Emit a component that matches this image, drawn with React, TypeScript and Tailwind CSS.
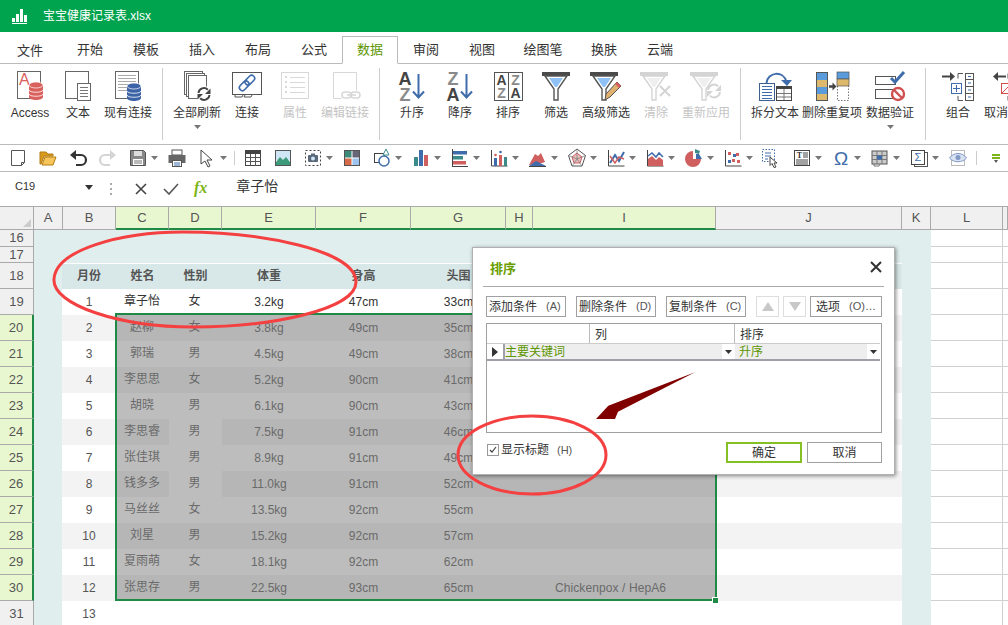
import { ReactNode } from "react";

const CJK = "font-['Liberation_Sans','Noto_Sans_CJK_SC',sans-serif]";

const tabs = ["开始", "模板", "插入", "布局", "公式", "数据", "审阅", "视图"];

type Item = { label: string; w: string; icon: ReactNode; off?: boolean; drop?: boolean };

function RibbonIcon({ children }: { children: ReactNode }) {
  return (
    <svg width="36" height="34" viewBox="0 0 36 34" fill="none" className="block shrink-0 overflow-visible">
      {children}
    </svg>
  );
}

function Lines({ x, y, w, n, gap = 3, c = "#777" }: { x: number; y: number; w: number; n: number; gap?: number; c?: string }) {
  return (
    <>
      {Array.from({ length: n }).map((_, i) => (
        <path key={i} d={`M${x} ${y + i * gap + 0.5}h${w}`} stroke={c} />
      ))}
    </>
  );
}

function Cylinder({ x, y, c }: { x: number; y: number; c: string }) {
  return (
    <>
      <path d={`M${x} ${y + 3}v12c0 4 14 4 14 0V${y + 3}z`} fill={c} />
      <ellipse cx={x + 7} cy={y + 3} rx="7" ry="3" fill={c} stroke="#fff" strokeWidth="0.7" />
      <path d={`M${x} ${y + 8}c0 3 14 3 14 0M${x} ${y + 12}c0 3 14 3 14 0`} stroke="#fff" strokeWidth="0.8" />
    </>
  );
}

function Funnel({ x, dark = false }: { x: number; dark?: boolean }) {
  const bar = dark ? "#4a4a4a" : "#d4d4d4";
  const line = dark ? "#555" : "#d4d4d4";
  const fill = dark ? "#8fc1f6" : "#efefef";
  return (
    <>
      <rect x={x} y="4" width="28" height="4" fill={bar} />
      <path d={`M${x + 3} 8l9 13v11h4V21l9-13z`} fill="#fff" stroke={line} strokeWidth="1.4" />
      <path d={`M${x + 7} 10h14l-6 9h-2z`} fill={fill} />
    </>
  );
}

function Refresh({ cx, cy, r, c, w = 2 }: { cx: number; cy: number; r: number; c: string; w?: number }) {
  return (
    <>
      <path d={`M${cx - r} ${cy - 1}a${r} ${r} 0 0 1 ${r * 1.7} -${r * 0.6}`} stroke={c} strokeWidth={w} />
      <path d={`M${cx + r} ${cy + 1}a${r} ${r} 0 0 1 -${r * 1.7} ${r * 0.6}`} stroke={c} strokeWidth={w} />
      <path d={`M${cx + r + 1} ${cy - r}v${r}h-${r}z`} fill={c} />
      <path d={`M${cx - r - 1} ${cy + r}v-${r}h${r}z`} fill={c} />
    </>
  );
}

function SortAZ({ top, bottom }: { top: string; bottom: string }) {
  const color = (s: string) => (s === "A" ? "#444" : "#8a8a8a");
  return (
    <RibbonIcon>
      <text x="11" y="17" textAnchor="middle" fontSize="18" fontWeight="700" fontFamily="Liberation Sans" fill={color(top)}>{top}</text>
      <text x="11" y="33" textAnchor="middle" fontSize="18" fontWeight="700" fontFamily="Liberation Sans" fill={color(bottom)}>{bottom}</text>
      <path d="M24.5 6v23M19 23.5l5.5 6 5.5-6" stroke="#3f6cab" strokeWidth="2" />
    </RibbonIcon>
  );
}

const g1: Item[] = [
  {
    label: "Access", w: "w-[48px]",
    icon: (
      <RibbonIcon>
        <rect x="5.5" y="3.5" width="23" height="27" fill="#fff" stroke="#666" />
        <text x="7" y="17" fontSize="16" fontFamily="Liberation Sans" fill="#d9605c">A</text>
        <Cylinder x={17} y={14} c="#d9605c" />
      </RibbonIcon>
    ),
  },
  {
    label: "文本", w: "w-[48px]",
    icon: (
      <RibbonIcon>
        <rect x="5.5" y="3.5" width="23" height="27" fill="#fff" stroke="#666" />
        <rect x="17.5" y="15.5" width="13" height="17" fill="#fff" stroke="#666" />
        <Lines x={20} y={19} w={8} n={4} />
      </RibbonIcon>
    ),
  },
  {
    label: "现有连接", w: "w-[52px]",
    icon: (
      <RibbonIcon>
        <rect x="5.5" y="3.5" width="23" height="27" fill="#fff" stroke="#666" />
        <Lines x={8} y={7} w={18} n={6} gap={3} c="#aaa" />
        <Cylinder x={17} y={15} c="#3c63a6" />
      </RibbonIcon>
    ),
  },
];

const g2: Item[] = [
  {
    label: "全部刷新", w: "w-[54px]", drop: true,
    icon: (
      <RibbonIcon>
        <rect x="5.5" y="3.5" width="18" height="23" fill="#fff" stroke="#666" />
        <rect x="7.5" y="5.5" width="18" height="23" fill="#fff" stroke="#666" />
        <rect x="9.5" y="7.5" width="18" height="23" fill="#fff" stroke="#666" />
        <circle cx="25" cy="26" r="8" fill="#fff" />
        <Refresh cx={25} cy={26} r={5.5} c="#444" />
      </RibbonIcon>
    ),
  },
  {
    label: "连接", w: "w-[46px]",
    icon: (
      <RibbonIcon>
        <rect x="3.5" y="4.5" width="29" height="22" fill="#fff" stroke="#555" />
        <path d="M6 27v2h7l1-2M16 27l-1 2h7l1-2" stroke="#555" />
        <g transform="rotate(-45 18 15)" stroke="#3f6cab" strokeWidth="1.6">
          <rect x="8.5" y="12" width="11" height="6" rx="3" />
          <rect x="16.5" y="12" width="11" height="6" rx="3" />
        </g>
      </RibbonIcon>
    ),
  },
  {
    label: "属性", w: "w-[50px]", off: true,
    icon: (
      <RibbonIcon>
        <rect x="4.5" y="4.5" width="27" height="26" stroke="#d8d8d8" />
        <Lines x={13} y={9} w={15} n={4} gap={5} c="#d8d8d8" />
        <path d="M8 8h2v2H8zM8 13h2v2H8zM8 18h2v2H8zM8 23h2v2H8z" fill="#d8d8d8" />
      </RibbonIcon>
    ),
  },
  {
    label: "编辑链接", w: "w-[50px]", off: true,
    icon: (
      <RibbonIcon>
        <path d="M6.5 30.5v-26h23v18" stroke="#d8d8d8" />
        <path d="M6.5 30.5h8" stroke="#d8d8d8" />
        <rect x="15" y="24" width="9" height="6" rx="3" stroke="#d8d8d8" strokeWidth="1.6" />
        <rect x="24" y="24" width="9" height="6" rx="3" stroke="#d8d8d8" strokeWidth="1.6" />
        <path d="M20 27h9" stroke="#d8d8d8" strokeWidth="1.6" />
      </RibbonIcon>
    ),
  },
];

const g3: Item[] = [
  { label: "升序", w: "w-[48px]", icon: <SortAZ top="A" bottom="Z" /> },
  { label: "降序", w: "w-[48px]", icon: <SortAZ top="Z" bottom="A" /> },
  {
    label: "排序", w: "w-[48px]",
    icon: (
      <RibbonIcon>
        <rect x="4.5" y="4.5" width="28" height="28" fill="#fff" stroke="#555" />
        <path d="M18.5 4v28" stroke="#555" />
        <text x="11.5" y="17" textAnchor="middle" fontSize="14" fontWeight="700" fontFamily="Liberation Sans" fill="#444">A</text>
        <text x="11.5" y="30" textAnchor="middle" fontSize="14" fontWeight="700" fontFamily="Liberation Sans" fill="#8a8a8a">Z</text>
        <text x="25.5" y="17" textAnchor="middle" fontSize="14" fontWeight="700" fontFamily="Liberation Sans" fill="#8a8a8a">Z</text>
        <text x="25.5" y="30" textAnchor="middle" fontSize="14" fontWeight="700" fontFamily="Liberation Sans" fill="#444">A</text>
      </RibbonIcon>
    ),
  },
  { label: "筛选", w: "w-[48px]", icon: <RibbonIcon><Funnel x={4} dark /></RibbonIcon> },
  {
    label: "高级筛选", w: "w-[52px]",
    icon: (
      <RibbonIcon>
        <Funnel x={2} dark />
        <path d="M17 32l1-6 11-12 4 4-11 11z" fill="#e0b070" stroke="#555" />
        <path d="M27 16l4 4 2-2-4-4z" fill="#d9605c" />
      </RibbonIcon>
    ),
  },
  {
    label: "清除", w: "w-[48px]", off: true,
    icon: (
      <RibbonIcon>
        <Funnel x={2} />
        <path d="M22 18l10 10M32 18L22 28" stroke="#d4d4d4" strokeWidth="2" />
      </RibbonIcon>
    ),
  },
  {
    label: "重新应用", w: "w-[52px]", off: true,
    icon: (
      <RibbonIcon>
        <Funnel x={2} />
        <Refresh cx={26} cy={23} r={6} c="#d4d4d4" />
      </RibbonIcon>
    ),
  },
];

const g4: Item[] = [
  {
    label: "拆分文本", w: "w-[54px]",
    icon: (
      <RibbonIcon>
        <path d="M9.5 15c1-11 17-13 20-1" stroke="#3f6cab" strokeWidth="2" />
        <path d="M24 12h11l-5 6z" fill="#3f6cab" />
        <rect x="2.5" y="15.5" width="15" height="17" fill="#fff" stroke="#3f5f8f" />
        <Lines x={5} y={18} w={10} n={5} c="#3f6cab" />
        <rect x="19.5" y="18.5" width="15" height="14" fill="#fff" stroke="#444" />
        <rect x="19" y="18" width="16" height="3" fill="#444" />
        <path d="M27 21v11M20 25.5h14M20 29h14" stroke="#777" />
      </RibbonIcon>
    ),
  },
  {
    label: "删除重复项", w: "w-[60px]",
    icon: (
      <RibbonIcon>
        <rect x="2.5" y="4.5" width="11" height="28" fill="#fff" stroke="#555" />
        <rect x="3" y="5" width="10" height="7" fill="#5a9bdc" />
        <rect x="3" y="12" width="10" height="7" fill="#dcb96c" />
        <rect x="3" y="19" width="10" height="7" fill="#5a9bdc" />
        <rect x="3" y="26" width="10" height="6" fill="#dcb96c" />
        <path d="M15 18.5h4" stroke="#444" strokeWidth="2.5" />
        <path d="M18.5 14.5l4 4-4 4z" fill="#444" />
        <rect x="23.5" y="4.5" width="11" height="28" stroke="#777" strokeDasharray="1.5 1.5" />
        <rect x="23" y="4" width="12" height="7" fill="#5a9bdc" stroke="#555" strokeWidth="0.7" />
        <rect x="23" y="11" width="12" height="7" fill="#dcb96c" stroke="#555" strokeWidth="0.7" />
      </RibbonIcon>
    ),
  },
  {
    label: "数据验证", w: "w-[56px]", drop: true,
    icon: (
      <RibbonIcon>
        <rect x="3.5" y="8.5" width="20" height="8" stroke="#555" />
        <rect x="3.5" y="21.5" width="20" height="9" stroke="#555" />
        <path d="M19 10l4 4 9-10" stroke="#3f6cab" strokeWidth="3" />
        <circle cx="26" cy="26" r="6" fill="#fff" stroke="#d05050" strokeWidth="2.4" />
        <path d="M22 22l8 8" stroke="#d05050" strokeWidth="2.4" />
      </RibbonIcon>
    ),
  },
];

const g5: Item[] = [
  {
    label: "组合", w: "w-[48px]",
    icon: (
      <RibbonIcon>
        <path d="M2 8.5h10" stroke="#444" strokeWidth="2" />
        <path d="M10 4l5 4.5-5 4.5z" fill="#444" />
        <rect x="11.5" y="15.5" width="10" height="10" stroke="#3f6cab" />
        <path d="M16.5 17v7M13 20.5h7" stroke="#3f6cab" />
        <path d="M23 5.5h-5v5M18 28v4.5h5" stroke="#555" />
        <rect x="25.5" y="5.5" width="8" height="27" stroke="#555" />
        <path d="M25 11.5h9M25 18.5h9M25 25.5h9" stroke="#555" />
        <path d="M28 8.5h3M28 15h3M28 22h3M28 29h3" stroke="#3f6cab" />
      </RibbonIcon>
    ),
  },
  {
    label: "取消组合", w: "w-[48px]",
    icon: (
      <RibbonIcon>
        <path d="M6 8.5h10" stroke="#444" strokeWidth="2" />
        <path d="M8 4l-5 4.5 5 4.5z" fill="#444" />
        <rect x="11.5" y="15.5" width="10" height="10" stroke="#d05050" />
        <path d="M12 25l9-9" stroke="#d05050" />
        <path d="M23 5.5h-5v5M18 28v4.5h5" stroke="#555" />
        <rect x="25.5" y="5.5" width="8" height="27" stroke="#555" />
      </RibbonIcon>
    ),
  },
];

function Tri({ c = "#666", className = "" }: { c?: string; className?: string }) {
  return (
    <svg width="7" height="4" viewBox="0 0 7 4" className={`block shrink-0 ${className}`}>
      <path d="M0 0h7L3.5 4z" fill={c} />
    </svg>
  );
}

function RibbonItems({ items }: { items: Item[] }) {
  return (
    <>
      {items.map((it) => (
        <div key={it.label} className={`${it.w} flex flex-col items-center shrink-0`}>
          {it.icon}
          <span className={`mt-1 leading-[14px] text-xs whitespace-nowrap ${it.off ? "text-[#c4c4c4]" : "text-[#333]"}`}>
            {it.label}
          </span>
          {it.drop && <Tri c="#777" className="mt-[5px]" />}
        </div>
      ))}
    </>
  );
}

function I({ children }: { children: ReactNode }) {
  return (
    <svg width="20" height="20" viewBox="0 0 20 20" fill="none" className="block">
      {children}
    </svg>
  );
}

type Quick = { icon: ReactNode; drop?: boolean; wide?: boolean };

const quick: Quick[] = [
  { icon: <I><path d="M3.5 2.5h13v12l-3 3h-10z" fill="#fff" stroke="#555" /><path d="M16.5 14.5h-3v3" stroke="#555" /></I> },
  { icon: <I><path d="M2 16V4h6l2 2h5v2H6l-3 8z" fill="#d99a20" stroke="#b47c10" /><path d="M4 17l3-8h11l-3 8z" fill="#f6c65a" stroke="#b47c10" /></I> },
  { icon: <I><path d="M6 7h7a4.5 4.5 0 0 1 0 10H8" stroke="#333" strokeWidth="2.2" /><path d="M8 2v10L2 7z" fill="#333" /></I> },
  { icon: <I><path d="M14 7H7a4.5 4.5 0 0 0 0 10h5" stroke="#d4d4d4" strokeWidth="2.2" /><path d="M12 2v10l6-5z" fill="#d4d4d4" /></I> },
  { drop: true, icon: <I><path d="M2.5 2.5h13l2 2v13h-15z" fill="#888" stroke="#555" /><rect x="6" y="3" width="8" height="5" fill="#ddd" /><rect x="5" y="11" width="10" height="6" fill="#fff" /><path d="M6 13h8M6 15h8" stroke="#777" /></I> },
  { icon: <I><rect x="5" y="2" width="10" height="5" fill="#fff" stroke="#555" /><rect x="1.5" y="7" width="17" height="8" fill="#666" /><rect x="5.5" y="12.5" width="9" height="6" fill="#fff" stroke="#555" /><path d="M7 15h6M7 17h6" stroke="#3f6cab" /></I> },
  { drop: true, icon: <I><path d="M4 2l11 10h-5l3 6-2 1-3-6-4 3z" fill="#fff" stroke="#444" /></I> },
];

const quick2: Quick[] = [
  { icon: <I><rect x="2.5" y="2.5" width="15" height="15" fill="#fff" stroke="#444" /><rect x="2" y="2" width="16" height="4" fill="#444" /><path d="M2 9.5h16M2 13.5h16M7.5 6v12M12.5 6v12" stroke="#555" /></I> },
  { icon: <I><rect x="2.5" y="2.5" width="15" height="15" fill="#fff" stroke="#555" /><rect x="3" y="3" width="14" height="9" fill="#cfe6f4" /><path d="M3 17v-3l4-5 3 3 3-3 4 5v3z" fill="#3d9a7a" /></I> },
  { drop: true, icon: <I><rect x="2.5" y="2.5" width="15" height="15" stroke="#444" strokeDasharray="2 2" /><rect x="5" y="7" width="10" height="7" rx="1" fill="#5a6a7a" /><rect x="8" y="5.5" width="4" height="2" fill="#5a6a7a" /><circle cx="10" cy="10.5" r="2" fill="#cfe6f4" /></I> },
  { icon: <I><rect x="2.5" y="2.5" width="15" height="15" fill="#fff" stroke="#555" /><rect x="3" y="3" width="6.5" height="6.5" fill="#3d8a7a" /><rect x="10.5" y="3" width="6.5" height="6.5" fill="#667" /><rect x="3" y="10.5" width="6.5" height="6.5" fill="#d86a4a" /><rect x="10.5" y="10.5" width="6.5" height="6.5" fill="#9cc4ee" /></I> },
  { drop: true, icon: <I><rect x="2.5" y="5.5" width="10" height="9" stroke="#444" /><circle cx="12" cy="13" r="5" fill="#fff" stroke="#3f6cab" strokeWidth="1.5" /><path d="M14 1l3 6h-6z" fill="#fff" stroke="#3d8a8a" /></I> },
  { drop: true, icon: <I><rect x="3" y="9" width="4" height="9" fill="#3d8a8a" /><rect x="8" y="2" width="4" height="16" fill="#3f6cab" /><rect x="13" y="7" width="4" height="11" fill="#d05f5f" /></I> },
  { drop: true, icon: <I><path d="M2.5 1v18" stroke="#444" /><rect x="3" y="3" width="14" height="3.5" fill="#3f6cab" /><rect x="3" y="8" width="10" height="3.5" fill="#3d8a8a" /><rect x="3" y="13" width="13" height="3.5" fill="#d05f5f" /><path d="M2 18.5h16" stroke="#444" /></I> },
  { drop: true, icon: <I><path d="M2.5 2v16h16" stroke="#444" /><rect x="5" y="10" width="3" height="8" fill="#3f6cab" /><rect x="10" y="7" width="3" height="11" fill="#d05f5f" /><rect x="15" y="9" width="3" height="9" fill="#3d8a8a" /><circle cx="6.5" cy="7" r="1.3" fill="#d05f5f" /><circle cx="11.5" cy="4" r="1.3" fill="#3f6cab" /></I> },
  { drop: true, icon: <I><path d="M1 17l6-11 3 2 3-3 4 9-3 1z" fill="#d05f5f" /><path d="M1 18l7-5 4 2 6 3z" fill="#3f6cab" /><path d="M1 18.5h17" stroke="#444" /></I> },
  { drop: true, icon: <I><path d="M10 1l8.5 6.5-3.5 10.5H5L1.5 7.5z" stroke="#555" /><path d="M10 5l5 4-2 6H7L5 9z" fill="#e8bcbc" stroke="#d05f5f" /><path d="M10 1v10M1.5 7.5L10 11l8.5-3.5M5 18l5-7 5 7" stroke="#777" strokeWidth="0.7" /></I> },
  { drop: true, icon: <I><path d="M2.5 2v16h16" stroke="#444" /><path d="M4 15l5-8 4 6 5-9" stroke="#3f6cab" strokeWidth="2" /><path d="M4 8l5 7 4-6 5 2" stroke="#d05f5f" strokeWidth="1.5" /></I> },
  { drop: true, icon: <I><path d="M2.5 2v16h16" stroke="#444" /><path d="M3 18v-7l4-3 4 4 3-3 4 3v6z" fill="#d05f5f" /><path d="M3 8l4-3 4 4 3-4 4 4" stroke="#3f6cab" strokeWidth="1.5" /></I> },
  { drop: true, icon: <I><path d="M10 2a8 8 0 1 0 8 8h-8z" fill="#d05f5f" transform="translate(-1 1)" /><path d="M11 1v4l4 1 1-3z" fill="#3d8a8a" /><path d="M12 6l3 0 3 5-6 0z" fill="#3f6cab" /></I> },
  { drop: true, icon: <I><path d="M2.5 2v16h16" stroke="#444" /><path d="M5 4h3v3H5zM13 5h3v3h-3zM9 11h3v3H9zM14 12h3v3h-3z" fill="#d05f5f" /><path d="M10 6h3v3h-3zM5 12h3v3H5z" fill="#3f6cab" /></I> },
];

const quick3: Quick[] = [
  { wide: true, icon: <I><rect x="2.5" y="1.5" width="12" height="12" stroke="#3f6cab" strokeDasharray="1.5 1.5" /><path d="M5 5h6M5 8h6M5 11h3" stroke="#3f6cab" /><path d="M10 9l7 6h-3l2 4-2 .5-2-4-2 2z" fill="#fff" stroke="#444" /></I> },
  { drop: true, icon: <I><rect x="2.5" y="2.5" width="15" height="15" fill="#fff" stroke="#444" /><text x="7.5" y="10" textAnchor="middle" fontSize="8" fontWeight="700" fontFamily="Liberation Serif" fill="#333">T</text><path d="M11 5h5M11 7h5M11 9h5M4 12h12M4 14h12M4 16h12" stroke="#444" /></I> },
  { drop: true, icon: <I><text x="10" y="17" textAnchor="middle" fontSize="19" fontFamily="Liberation Sans" fill="#3f6cab">Ω</text></I> },
  { drop: true, icon: <I><rect x="2" y="3" width="15" height="13" fill="#ccc" stroke="#555" /><path d="M7 3v13M12 3v13M2 7.5h15M2 11.5h15" stroke="#777" /><rect x="7" y="7.5" width="5" height="4" fill="#3f6cab" /><path d="M4 16v2h5l1-2" stroke="#777" /></I> },
  { drop: true, icon: <I><rect x="5.5" y="4.5" width="13" height="14" stroke="#555" /><rect x="2.5" y="2.5" width="13" height="14" fill="#fff" stroke="#444" /><text x="9" y="13" textAnchor="middle" fontSize="11" fontFamily="Liberation Sans" fill="#3f6cab">Σ</text></I> },
  { icon: <I><rect x="3.5" y="2.5" width="13" height="15" stroke="#bbb" /><path d="M1.5 10c4-6 13-6 17 0-4 5-13 5-17 0z" fill="#d8e2f2" stroke="#7f98c4" /><circle cx="10" cy="9.5" r="2.5" fill="#7f98c4" /></I> },
];

function QuickRow({ list }: { list: Quick[] }) {
  return (
    <>
      {list.map((q, i) => (
        <div key={i} className={`flex items-center shrink-0 ${q.drop ? "w-[39px]" : q.wide ? "w-[32px]" : "w-[30px]"}`}>
          <div className="w-[30px] flex justify-center">{q.icon}</div>
          {q.drop && <Tri c="#777" className="-ml-[2px]" />}
        </div>
      ))}
    </>
  );
}

const cols = ["A", "B", "C", "D", "E", "F", "G", "H", "I", "J", "K", "L", ""];
const gridCols = "grid grid-cols-[34px_29px_53px_53px_53px_94px_95px_95px_27px_183px_186px_29px_72px_5px]";

const people = [
  ["1", "章子怡", "女", "3.2kg", "47cm", "33cm"],
  ["2", "赵柳", "女", "3.8kg", "49cm", "35cm"],
  ["3", "郭瑞", "男", "4.5kg", "49cm", "38cm"],
  ["4", "李思思", "女", "5.2kg", "90cm", "41cm"],
  ["5", "胡晓", "男", "6.1kg", "90cm", "43cm"],
  ["6", "李思睿", "男", "7.5kg", "91cm", "46cm"],
  ["7", "张佳琪", "男", "8.9kg", "91cm", "49cm"],
  ["8", "钱多多", "男", "11.0kg", "91cm", "52cm"],
  ["9", "马丝丝", "女", "13.5kg", "92cm", "55cm"],
  ["10", "刘星", "男", "15.2kg", "92cm", "57cm"],
  ["11", "夏雨萌", "女", "18.1kg", "92cm", "62cm"],
  ["12", "张思存", "男", "22.5kg", "93cm", "65cm"],
];

function RowHead({ n, h }: { n: number; h: string }) {
  const sel = n >= 20 && n <= 30;
  return (
    <div
      className={`${h} flex items-center justify-center text-[13px] text-[#555] border-b border-[#aaa] ${
        sel ? "bg-[#e9f7d0] border-r-2 border-r-[#1e8a46]" : "bg-[#f0f0f0] border-r border-r-[#aaa]"
      }`}
    >
      {n}
    </div>
  );
}

function SideCols({ h }: { h: string }) {
  return (
    <>
      <div className={`${h} bg-[#e0efee]`} />
      <div className={`${h} bg-white border-b border-r border-[#d0d0d0]`} />
      <div className={`${h} bg-white border-b border-[#d0d0d0]`} />
    </>
  );
}

function BlankRow({ n, h }: { n: number; h: string }) {
  return (
    <div className={gridCols}>
      <RowHead n={n} h={h} />
      <div className={`${h} col-span-10 bg-[#e0efee]`} />
      <SideCols h={h} />
    </div>
  );
}

function HeadRow() {
  const h = "h-[26px]";
  const heads = ["月份", "姓名", "性别", "体重", "身高", "头围", "", "", ""];
  return (
    <div className={gridCols}>
      <RowHead n={18} h={h} />
      <div className={`${h} bg-[#e0efee]`} />
      {heads.map((t, i) => (
        <div
          key={i}
          className={`${h} ${i === 0 ? "-ml-px" : ""} bg-[#d8e8e8] border-t border-white flex items-center justify-center pb-[2px] text-xs font-bold text-[#555]`}
        >
          {t}
        </div>
      ))}
      <SideCols h={h} />
    </div>
  );
}

function DataRow({ n, p, note }: { n: number; p: string[]; note?: string }) {
  const h = "h-[26px]";
  const even = n % 2 === 0;
  const sel = n >= 20 && n <= 30;
  const base = even ? "bg-[#f3f3f3]" : "bg-white";
  const dim = even ? "bg-[#b6b6b6]" : "bg-[#bdbdbd]";
  const cell = `${h} flex items-center justify-center text-xs`;
  const text = sel ? "text-[#6a6a6a]" : n === 19 ? "text-[#333]" : "text-[#555]";
  const body = sel ? dim : base;
  // rows 24 and 26 have the gender cell a shade lighter
  const gender = sel && (n === 24 || n === 26) ? "bg-[#bdbdbd]" : body;
  return (
    <div className={gridCols}>
      <RowHead n={n} h={h} />
      <div className={`${h} bg-[#e0efee]`} />
      <div className={`${cell} -ml-px ${base} text-[#555]`}>{p[0]}</div>
      <div className={`${cell} pb-[2px] pr-px ${body} ${text}`}>{p[1]}</div>
      <div className={`${cell} pb-[2px] pr-[2px] ${gender} ${text}`}>{p[2]}</div>
      <div className={`${cell} ${body} ${text}`}>{p[3]}</div>
      <div className={`${cell} ${body} ${text}`}>{p[4]}</div>
      <div className={`${cell} ${body} ${text}`}>{p[5]}</div>
      <div className={`${cell} ${body}`} />
      <div className={`${cell} pr-[28px] pb-px tracking-[0.1px] ${body} ${text}`}>{note}</div>
      <div className={`${cell} ${base}`} />
      <SideCols h={h} />
    </div>
  );
}

function DlgButton({ label, hot, className }: { label: string; hot: string; className: string }) {
  return (
    <div className={`h-[21px] border border-[#a0a0a0] flex items-center pl-[2px] text-xs text-[#333] whitespace-nowrap ${className}`}>
      {label}
      <span className="ml-[9px] text-[11px] text-[#555]">{hot}</span>
    </div>
  );
}

function SortDialog() {
  return (
    <div className="absolute left-[472px] top-[247px] w-[423px] h-[228px] bg-white border border-[#b0b0b0] shadow-[1px_1px_4px_rgba(0,0,0,0.45)] px-[10px]">
      <div className="h-[39px] border-b border-[#aaa] flex items-center justify-between pl-[7px] pr-[1px]">
        <span className="mt-[3px] text-[13px] font-bold text-[#6a9e00]">排序</span>
        <svg width="12" height="12" viewBox="0 0 12 12" className="mr-px">
          <path d="M1 1l10 10M11 1L1 11" stroke="#333" strokeWidth="2" />
        </svg>
      </div>
      <div className="flex items-center mt-[9px] ml-[3px]">
        <DlgButton label="添加条件" hot="(A)" className="w-[80px]" />
        <DlgButton label="删除条件" hot="(D)" className="w-[80px] ml-[10px]" />
        <DlgButton label="复制条件" hot="(C)" className="w-[80px] ml-[10px]" />
        <div className="w-[23px] h-[21px] ml-[10px] border border-[#ddd] flex items-center justify-center">
          <svg width="12" height="9" viewBox="0 0 12 9"><path d="M6 0l6 9H0z" fill="#c8c8c8" /></svg>
        </div>
        <div className="w-[23px] h-[21px] ml-[4px] border border-[#ddd] flex items-center justify-center">
          <svg width="12" height="9" viewBox="0 0 12 9"><path d="M6 9L0 0h12z" fill="#c8c8c8" /></svg>
        </div>
        <div className="w-[72px] h-[21px] ml-[4px] border border-[#a0a0a0] flex items-center pl-[5px] text-xs text-[#333] whitespace-nowrap">
          选项<span className="ml-[9px] text-[11px] text-[#555]">(O)…</span>
        </div>
      </div>
      <div className="mt-[6px] ml-[3px] w-[396px] h-[110px] border border-[#a0a0a0]">
        <div className="h-[19px] flex text-xs text-[#333] leading-[23px]">
          <div className="w-[103px] border-r border-[#bbb]" />
          <div className="w-[145px] pl-[5px] border-r border-[#bbb]">列</div>
          <div className="pl-[5px]">排序</div>
        </div>
        <div className="h-[18px] flex border-t border-[#ccc] border-b-2 border-b-[#a0a0a8] mr-px text-xs text-[#5c9600] leading-[16px]">
          <div className="w-[16px] flex items-center justify-center">
            <svg width="6" height="10" viewBox="0 0 6 10"><path d="M0 0l6 5-6 5z" fill="#333" /></svg>
          </div>
          <div className="w-[232px] bg-[#eee] border-l-2 border-[#a0a0a8] flex justify-between">
            主要关键词
            <div className="w-[13px] bg-white flex items-center justify-center"><Tri c="#333" /></div>
          </div>
          <div className="flex-1 bg-[#eee] pl-[4px] flex justify-between">
            升序
            <div className="w-[13px] bg-white flex items-center justify-center"><Tri c="#333" /></div>
          </div>
        </div>
      </div>
      <div className="flex items-start justify-between mt-[9px] ml-[4px] w-[395px]">
        <div className="flex items-center h-[14px] mt-px">
          <div className="w-[12px] h-[12px] border border-[#999] flex items-center justify-center">
            <svg width="10" height="10" viewBox="0 0 10 10"><path d="M2 5l2 2 4-5" stroke="#444" fill="none" strokeWidth="1.2" /></svg>
          </div>
          <span className="ml-[2px] text-xs text-[#333]">显示标题</span>
          <span className="ml-[8px] text-[11px] text-[#555]">(H)</span>
        </div>
        <div className="flex gap-[5px]">
          <div className="w-[76px] h-[21px] border-2 border-[#85c025] flex items-center justify-center text-xs text-[#333]">确定</div>
          <div className="w-[75px] h-[21px] border border-[#a0a0a0] flex items-center justify-center text-xs text-[#333]">取消</div>
        </div>
      </div>
    </div>
  );
}

export default function App() {
  return (
    <div className={`relative w-[1008px] h-[625px] overflow-hidden bg-white ${CJK}`}>
      {/* title bar */}
      <div className="h-8 bg-[#00a44e] flex items-center text-white">
        <svg width="16" height="16" viewBox="0 0 16 16" className="ml-[12px]">
          <path d="M0 10h3v4H0zM4 6h3v8H4zM8 1h3v13H8zM12 7h3v7h-3z M0 15h15v1H0z" fill="#fff" />
        </svg>
        <span className="ml-[15px] text-xs">宝宝健康记录表.xlsx</span>
      </div>

      {/* tabs */}
      <div className="h-8 flex items-end border-b border-[#bbb] text-[13px] text-[#333]">
        <div className="w-[62px] h-[27px] -mb-px flex items-center justify-center pr-[2px]">文件</div>
        {tabs.map((t) => (
          <div
            key={t}
            className={`w-14 h-[28px] -mb-px flex items-center justify-center ${
              t === "数据" ? "border border-[#bbb] border-b-white bg-white text-[#5c9600]" : ""
            }`}
          >
            {t}
          </div>
        ))}
        <div className="w-[66px] h-[28px] -mb-px flex items-center justify-center">绘图笔</div>
        <div className="w-14 h-[28px] -mb-px flex items-center justify-center">换肤</div>
        <div className="w-14 h-[28px] -mb-px flex items-center justify-center">云端</div>
      </div>

      {/* ribbon */}
      <div className="h-[81px] flex overflow-hidden border-b border-[#bbb]">
        <div className="flex w-[163px] h-[72px] mt-1 pl-[6px] border-r border-[#ccc] shrink-0"><RibbonItems items={g1} /></div>
        <div className="flex w-[217px] h-[72px] mt-1 pl-[7px] border-r border-[#ccc] shrink-0"><RibbonItems items={g2} /></div>
        <div className="flex w-[361px] h-[72px] mt-1 pl-[8px] border-r border-[#ccc] shrink-0"><RibbonItems items={g3} /></div>
        <div className="flex w-[185px] h-[72px] mt-1 pl-[7px] border-r border-[#ccc] shrink-0"><RibbonItems items={g4} /></div>
        <div className="flex h-[72px] mt-1 pl-[8px] gap-[2px] shrink-0"><RibbonItems items={g5} /></div>
      </div>

      {/* quick access */}
      <div className="h-[27px] flex items-center pl-[3px] border-b border-[#bbb] overflow-hidden">
        <QuickRow list={quick} />
        <div className="w-[7px] flex justify-center shrink-0"><div className="w-px h-[14px] bg-[#ccc]" /></div>
        <QuickRow list={quick2} />
        <div className="-ml-[2px] flex">
          <QuickRow list={quick3} />
        </div>
        <div className="w-px h-[14px] bg-[#ccc] ml-[3px] shrink-0" />
        <svg width="10" height="10" viewBox="0 0 10 10" className="ml-[14px] shrink-0">
          <path d="M1 1h8v2H1z" fill="#7cb518" /><path d="M1 4h8v2H1z" fill="#7cb518" /><path d="M3 7h4L5 10z" fill="#555" />
        </svg>
      </div>

      {/* formula bar */}
      <div className="h-[34px] flex items-center">
        <span className="ml-[15px] w-[70px] text-[11px] text-[#333] -mt-[6px]">C19</span>
        <svg width="8" height="5" viewBox="0 0 8 5" className="-mt-[4px]"><path d="M0 0h8L4 5z" fill="#333" /></svg>
        <svg width="2" height="12" viewBox="0 0 2 12" className="ml-[17px]"><path d="M0 0h2v2H0zM0 5h2v2H0zM0 10h2v2H0z" fill="#aaa" /></svg>
        <svg width="12" height="12" viewBox="0 0 12 12" className="ml-[23px]"><path d="M1 1l10 10M11 1L1 11" stroke="#444" strokeWidth="1.6" /></svg>
        <svg width="16" height="12" viewBox="0 0 16 12" className="ml-[16px]"><path d="M1 6l5 5 9-10" stroke="#555" strokeWidth="1.6" fill="none" /></svg>
        <span className="ml-[15px] -mt-[2px] text-[16px] font-bold italic text-[#7cb518] font-['Liberation_Serif',serif]">fx</span>
        <span className="ml-[29px] text-sm text-[#333] -mt-[6px]">章子怡</span>
      </div>

      {/* sheet */}
      <div className={`${gridCols} border-t border-[#aaa]`}>
        <div className="h-[23px] bg-[#f0f0f0] border-r border-b border-[#aaa] relative">
          <svg width="8" height="8" viewBox="0 0 8 8" className="absolute right-[2px] bottom-[2px]"><path d="M8 0v8H0z" fill="#ccc" /></svg>
        </div>
        {cols.map((c, i) => {
          const sel = i >= 2 && i <= 8;
          return (
            <div
              key={i}
              className={`h-[23px] flex items-center justify-center text-[13px] text-[#555] border-r border-[#aaa] ${
                sel ? "bg-[#e9f7d0] border-b-2 border-b-[#1e8a46]" : "bg-[#f0f0f0] border-b"
              }`}
            >
              {c}
            </div>
          );
        })}
      </div>
      <BlankRow n={16} h="h-[17px]" />
      <BlankRow n={17} h="h-[16px]" />
      <HeadRow />
      {people.map((p, i) => (
        <DataRow key={p[0]} n={19 + i} p={p} note={i === 11 ? "Chickenpox / HepA6" : undefined} />
      ))}
      <DataRow n={31} p={["13", "", "", "", "", ""]} />

      {/* selection frame */}
      <div className="absolute left-[115px] top-[313px] w-[602px] h-[288px] border-2 border-[#1e8a46]" />
      <div className="absolute left-[712px] top-[597px] w-[7px] h-[7px] bg-[#1e8a46] border border-white" />

      <SortDialog />

      {/* hand drawn marks */}
      <svg width="1008" height="625" viewBox="0 0 1008 625" fill="none" className="absolute left-0 top-0 pointer-events-none">
        <path d="M54 279C56 250 120 232 183 232C260 232 356 250 356 282C356 310 270 327 193 327C120 327 52 305 54 279Z" stroke="#f44040" strokeWidth="3" />
        <ellipse cx="532" cy="455" rx="74" ry="39" stroke="#f44040" strokeWidth="3" />
        <path d="M695 372.3L608.300 405.700 596 419H615L618 411.700z" fill="#800000" />
      </svg>
    </div>
  );
}
